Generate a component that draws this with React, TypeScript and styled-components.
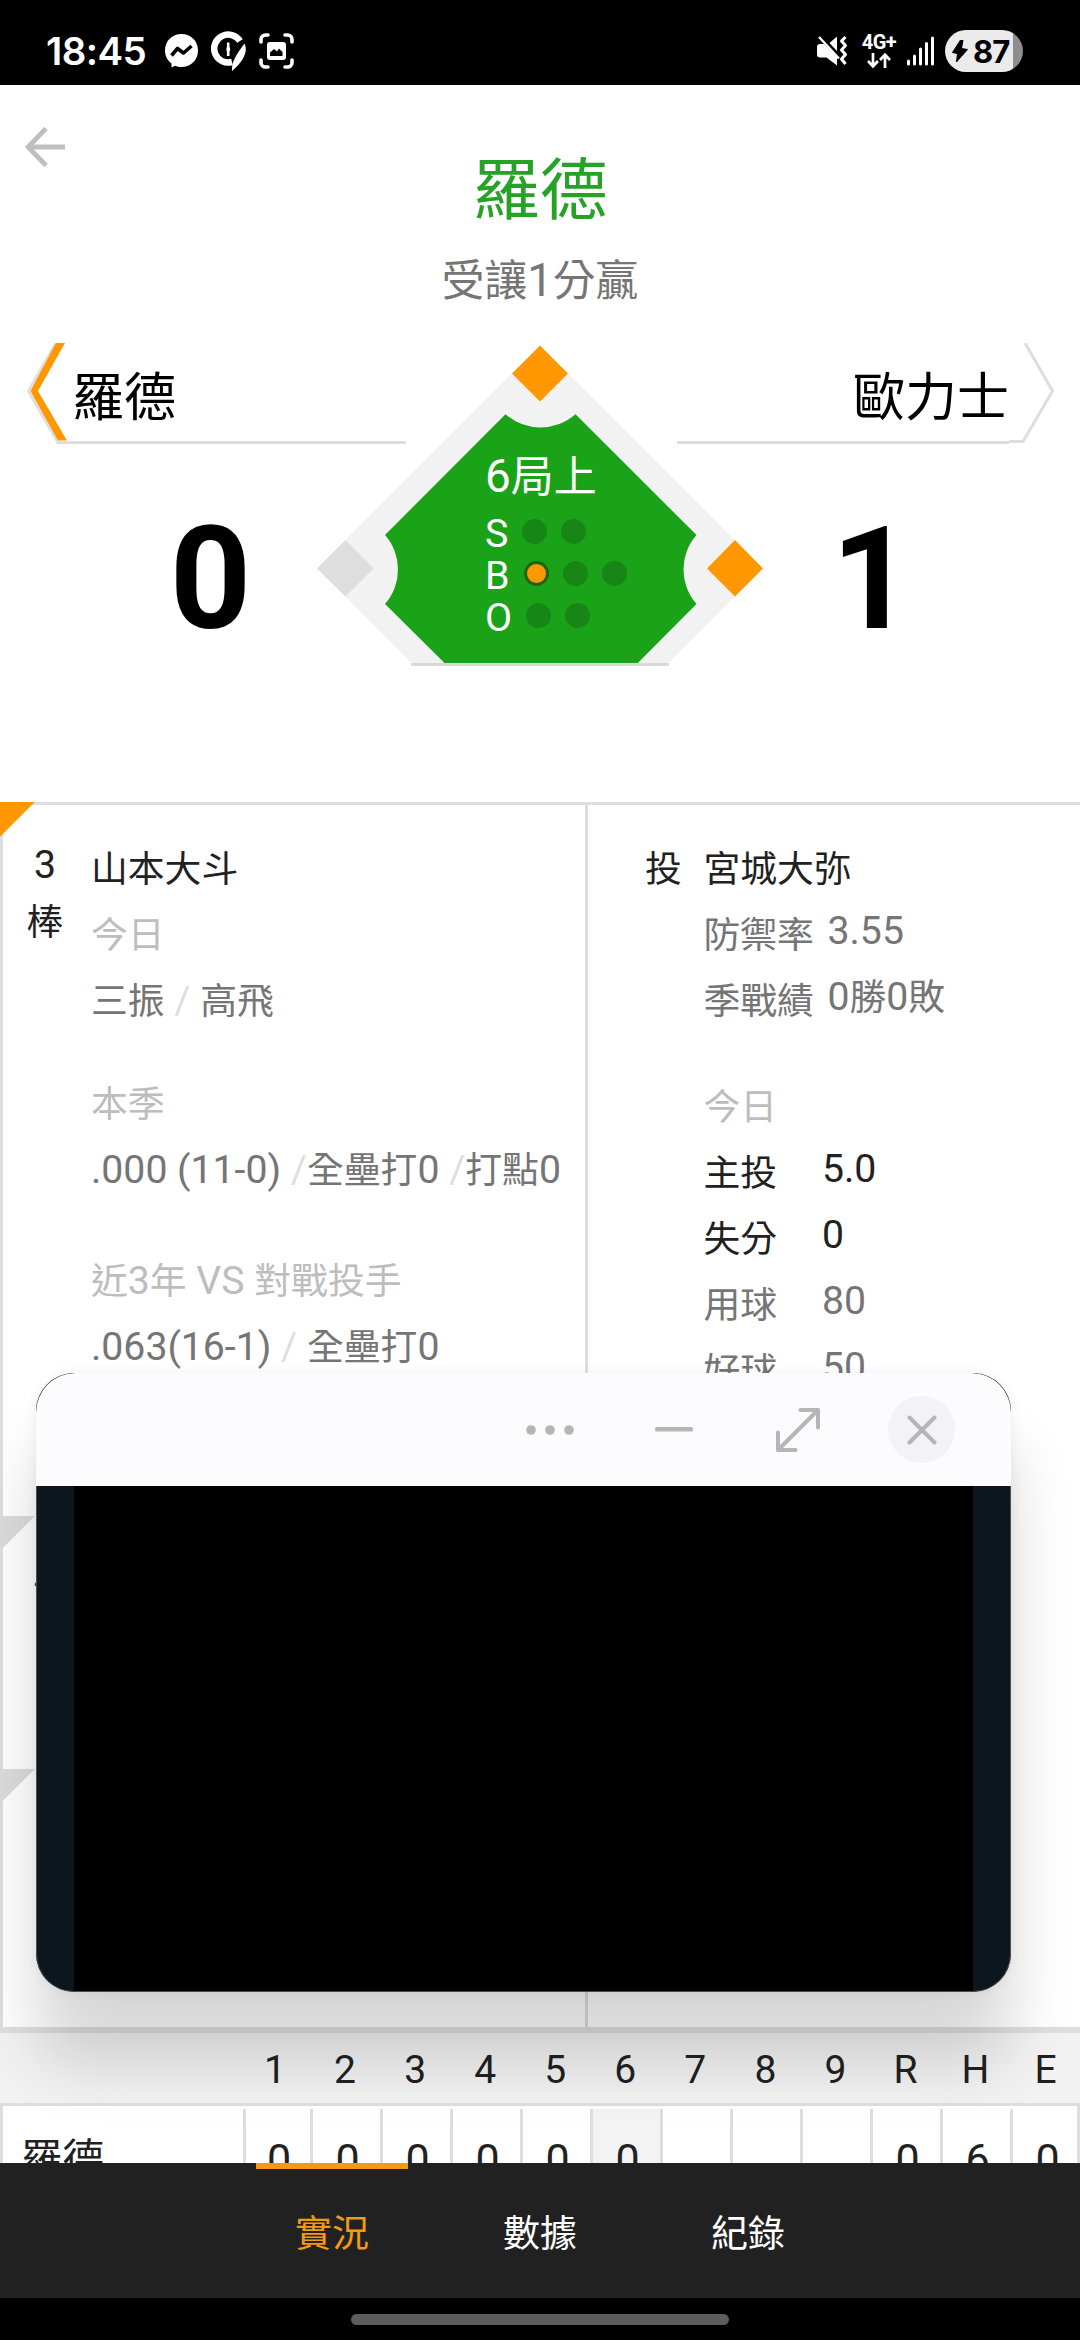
import React from "react";
import styled, { createGlobalStyle } from "styled-components";

const Global = createGlobalStyle`
  html, body { margin: 0; padding: 0; background: #000; }
  *, *::before, *::after { box-sizing: border-box; }
  svg { display: block; }
`;

const line = "#dedede";
const orange = "#ff9800";
const ink = { dark: "#212121", mid: "#757575", soft: "#bdbdbd", faint: "#dedede" };
type Tone = keyof typeof ink;

const Screen = styled.div`
  position: relative;
  width: 1080px;
  height: 2340px;
  display: flex;
  flex-direction: column;
  overflow: hidden;
  background: #fff;
  font-family: Roboto, "Noto Sans CJK TC", sans-serif;
  color: ${ink.dark};
`;

/* ---------- mixed script text ---------- */

const Latin = styled.span`
  font-size: 1.065em;
  line-height: 0;
`;

const Mixed = ({ children }: { children: string }) => (
  <>
    {children
      .split(/([\x20-\x7e]+)/)
      .filter(Boolean)
      .map((part, i) => (/^[\x20-\x7e]/.test(part) ? <Latin key={i}>{part}</Latin> : part))}
  </>
);

/* ---------- status bar ---------- */

const StatusBar = styled.header`
  flex: none;
  height: 85px;
  padding: 17px 57px 0 46px;
  display: flex;
  justify-content: space-between;
  align-items: flex-start;
  background: #000;
  color: #fff;
  font-family: Inter, sans-serif;
`;

const StatusGroup = styled.div<{ $gap: number }>`
  display: flex;
  align-items: center;
  gap: ${(p) => p.$gap}px;
  height: 68px;
`;

const Clock = styled.span`
  width: 106px;
  font-size: 38.5px;
  font-weight: 600;
  letter-spacing: -0.6px;
  line-height: 68px;
`;

const Network = styled.div`
  width: 34px;
  display: flex;
  flex-direction: column;
  align-items: center;
  gap: 3px;
`;

const NetworkLabel = styled.span`
  font-family: Roboto, sans-serif;
  font-size: 20px;
  font-weight: 700;
  line-height: 15px;
  letter-spacing: -0.5px;
`;

const Battery = styled.div`
  width: 78px;
  height: 42px;
  padding-left: 7px;
  display: flex;
  align-items: center;
  gap: 5px;
  border-radius: 21px;
  background: linear-gradient(90deg, #ebebeb 0 67.5px, #8e8e8e 67.5px);
  color: #000;
  font-size: 31px;
  font-weight: 700;
  letter-spacing: -1px;
`;

/* ---------- hero ---------- */

const Hero = styled.section`
  flex: none;
  height: 717px;
  display: flex;
  flex-direction: column;
`;

const TopRow = styled.div`
  height: 258px;
  display: grid;
  grid-template-columns: 140px 1fr 140px;
`;

const BackButton = styled.button`
  width: 80px;
  height: 80px;
  margin: 22px 0 0 5px;
  padding: 20px;
  border: 0;
  background: none;
`;

const Pick = styled.div`
  display: flex;
  flex-direction: column;
  align-items: center;
  white-space: pre;
`;

const PickTeam = styled.h1`
  margin: 56px 0 0;
  font-size: 67.5px;
  font-weight: 400;
  line-height: 100px;
  color: #26a326;
`;

const PickNote = styled.p`
  margin: 10px 0 0;
  font-size: 42.7px;
  line-height: 60px;
  color: ${ink.mid};
`;

const Board = styled.div`
  display: grid;
  grid-template-columns: 317px 89px 271px 86px 317px;
  grid-template-rows: 101px 240px;
`;

const TeamHead = styled.div<{ $away?: boolean }>`
  grid-row: 1;
  grid-column: ${(p) => (p.$away ? "4 / 6" : "1 / 3")};
  display: flex;
  flex-direction: ${(p) => (p.$away ? "row-reverse" : "row")};
  padding: ${(p) => (p.$away ? "0 26px 0 0" : "0 0 0 26px")};
`;

const TeamName = styled.div<{ $away?: boolean }>`
  flex: 1;
  border-bottom: 3px solid ${line};
  text-align: ${(p) => (p.$away ? "right" : "left")};
  text-indent: ${(p) => (p.$away ? 0 : 3)}px;
  font-size: 52px;
  line-height: 112px;
  color: #000;
`;

const Score = styled.div<{ $away?: boolean }>`
  grid-row: 2;
  grid-column: ${(p) => (p.$away ? 5 : 1)};
  margin-top: 33px;
  padding: ${(p) => (p.$away ? "0 99px 0 0" : "0 0 0 104px")};
  text-align: center;
  font-size: 142px;
  font-weight: 700;
  line-height: 206px;
  color: #000;
`;

const Field = styled.div`
  grid-row: 1 / 3;
  grid-column: 2 / 5;
  display: grid;
  & > * { grid-area: 1 / 1; }
`;

const FieldInfo = styled.div`
  z-index: 1;
  padding: 106px 0 0 168px;
  color: #fff;
`;

const Inning = styled.div`
  height: 63px;
  font-size: 43px;
  line-height: 56px;
`;

const CountRow = styled.div`
  display: flex;
  align-items: center;
  gap: 14px;
  height: 42px;
  font-size: 39.4px;
  line-height: 43px;
`;

const Dot = styled.i<{ $on?: boolean }>`
  width: 25px;
  height: 25px;
  margin-top: -3px;
  border-radius: 50%;
  border: ${(p) => (p.$on ? "3px solid #1c6410" : "0")};
  background: ${(p) => (p.$on ? orange : "#178617")};
`;

/* ---------- match-up panel ---------- */

const Matchup = styled.section`
  flex: none;
  height: 1231px;
  display: grid;
  grid-template-columns: 588px 1fr;
  border-top: 3px solid ${line};
  border-bottom: 6px solid ${line};
  font-size: 36.8px;
  white-space: pre;
`;

const Batters = styled.div`
  display: grid;
  grid-template-rows: 714px 253px 1fr;
  border-left: 3px solid ${line};
  border-right: 3px solid ${line};
`;

const BatterCard = styled.article<{ $active?: boolean }>`
  margin: -3px 0 0 -3px;
  padding: 35px 0 0 3px;
  display: grid;
  grid-template-columns: 84px 1fr;
  column-gap: 4px;
  background: linear-gradient(135deg, ${(p) => (p.$active ? orange : "#dcdcdc")} 0 24.4px, transparent 24.9px) 0 0 / 36px 36px no-repeat;
`;

const Order = styled.div`
  display: flex;
  flex-direction: column;
  align-items: center;
  line-height: 57px;
`;

const Lines = styled.div`
  display: flex;
  flex-direction: column;
`;

const Line = styled.div<{ $tone?: Tone; $gap?: number }>`
  height: 66px;
  margin-top: ${(p) => p.$gap ?? 0}px;
  line-height: 66px;
  color: ${(p) => ink[p.$tone ?? "dark"]};
`;

const Slash = styled.span`
  color: ${ink.faint};
`;

const Pitcher = styled.article`
  padding: 32px 0 0 57px;
  display: grid;
  grid-template-columns: 58.5px 1fr;
`;

const Stat = styled.dl<{ $tone?: Tone; $label?: number }>`
  height: 66px;
  margin: 0;
  display: grid;
  grid-template-columns: ${(p) => p.$label ?? 118.5}px auto;
  color: ${(p) => ink[p.$tone ?? "mid"]};
`;

const StatLabel = styled.dt`
  line-height: 66px;
`;

const StatValue = styled.dd`
  margin: 0;
  line-height: 58px;
`;

/* ---------- line score ---------- */

const LineScore = styled.section`
  flex: 1;
  min-height: 0;
  overflow: hidden;
`;

const InningsRow = styled.div`
  height: 73px;
  padding-left: 240px;
  display: grid;
  grid-template-columns: repeat(12, 70.05px);
  background: #f2f2f2;
  border-bottom: 3px solid ${line};
  text-align: center;
  font-size: 39px;
  line-height: 75px;
`;

const RunsRow = styled.div`
  height: 110px;
  display: grid;
  grid-template-columns: 240px 67px repeat(11, 70px);
  border-left: 3px solid ${line};
  border-right: 3px solid ${line};
`;

const RunsTeam = styled.div`
  padding: 3px 0 0 18px;
  font-size: 41.5px;
  line-height: 101px;
`;

const Run = styled.div<{ $now?: boolean }>`
  margin-top: 3px;
  padding-left: 2px;
  border-left: 3px solid ${line};
  background: ${(p) => (p.$now ? "#f3f3f3" : "none")};
  text-align: center;
  font-size: 43px;
  line-height: 101px;
`;

/* ---------- bottom navigation ---------- */

const Tabs = styled.nav`
  flex: none;
  height: 135px;
  display: flex;
  justify-content: center;
  background: #212121;
`;

const Tab = styled.a<{ $active?: boolean }>`
  width: 208px;
  display: flex;
  flex-direction: column;
  align-items: center;
  font-size: 37px;
  line-height: 129px;
  color: ${(p) => (p.$active ? "#f39a14" : "#fff")};
  &::before {
    content: "";
    flex: none;
    width: 152px;
    height: 6px;
    margin-bottom: 1px;
    background: ${(p) => (p.$active ? "#f39a14" : "transparent")};
  }
`;

const HomeBar = styled.footer`
  flex: none;
  height: 42px;
  padding-top: 16px;
  background: #000;
  &::before {
    content: "";
    display: block;
    width: 378px;
    height: 11px;
    margin: 0 auto;
    border-radius: 6px;
    background: #5c5c5c;
  }
`;

/* ---------- pop-up video window ---------- */

const Popup = styled.aside`
  position: absolute;
  left: 36px;
  top: 1373px;
  width: 975px;
  height: 618.5px;
  display: flex;
  flex-direction: column;
  border-radius: 38px;
  overflow: hidden;
  background: #0d161c;
  box-shadow: 0 70px 64px rgba(0, 0, 0, 0.155), 0 0 14px rgba(0, 0, 0, 0.06);
`;

const PopupBar = styled.div`
  height: 113px;
  padding-right: 56px;
  display: flex;
  justify-content: flex-end;
  align-items: center;
  gap: 57px;
  border-radius: 39.5px 39.5px 0 0;
  background: #fcfcfe;
`;

const PopupButton = styled.button<{ $filled?: boolean }>`
  width: 67px;
  height: 67px;
  padding: 0;
  display: grid;
  place-items: center;
  border: 0;
  border-radius: 50%;
  background: ${(p) => (p.$filled ? "#f3f3f5" : "none")};
`;

const Video = styled.div`
  flex: 1;
  padding: 0 37px 0;
  border: solid #4b4f52;
  border-width: 0 1px 1px;
  border-radius: 0 0 38px 38px;
  display: flex;
  &::before {
    content: "";
    flex: 1;
    background: #000;
  }
`;

const g = "#b5b5b7";

const FieldArt = () => (
  <svg width="446" height="341" viewBox="317 343 446 341">
    <path d="M540 345.5 763 568.5 668.500 663H411.500L317 568.500Z" fill="#f2f2f2" />
    <path
      d="M505.500 414.300A53.300 53.300 0 0 0 575.500 414.300L696.500 535A52.300 52.300 0 0 0 696.500 604L637.800 663H444.500L385 604A52.300 52.300 0 0 0 385 535Z"
      fill="#1aa318"
    />
    <rect x="411" y="663" width="258" height="3" fill="#d9d9d9" />
    <path d="M540 345.500 568 373.500 540 401.500 512 373.500Z" fill={orange} />
    <path d="M735 540 763 568.500 735 596.500 707 568.500Z" fill={orange} />
    <path d="M345.500 540 373.500 568.500 345.500 596.500 317 568.500Z" fill="#dedede" />
  </svg>
);

const COUNTS = [
  { label: "S", max: 2, on: 0 },
  { label: "B", max: 3, on: 1 },
  { label: "O", max: 2, on: 0 },
];

const PITCHING: { label: string; value: string; tone: Tone }[] = [
  { label: "主投", value: "5.0", tone: "dark" },
  { label: "失分", value: "0", tone: "dark" },
  { label: "用球", value: "80", tone: "mid" },
  { label: "好球", value: "50", tone: "mid" },
];

const HEAD = ["1", "2", "3", "4", "5", "6", "7", "8", "9", "R", "H", "E"];
const RUNS = ["0", "0", "0", "0", "0", "0", "", "", "", "0", "6", "0"];

export default function App() {
  return (
    <Screen>
      <Global />
      <StatusBar>
        <StatusGroup $gap={13}>
          <Clock>18:45</Clock>
          <svg width="33" height="34" viewBox="0 0 33 34">
            <path d="M16.500 0C26 0 33 7 33 16.500S26 33 16.500 33C14 33 12 32.600 10 31.800L6.500 33.600V29.500C2.500 26.500 0 22 0 16.500 0 7 7 0 16.500 0Z" fill="#fff" />
            <path d="M6.500 21.500 12.500 14.500 18.500 19 26.500 12" fill="none" stroke="#000" strokeWidth="3.600" strokeLinejoin="round" strokeLinecap="butt" />
          </svg>
          <svg width="35" height="40" viewBox="0 0 35 40">
            <path d="M29 10A14 14 0 1 0 21 31" fill="none" stroke="#fff" strokeWidth="6.500" />
            <path d="M33.500 12.500C36.500 19 35 28 21 40 20.500 33 23 26 33.500 12.500Z" fill="#fff" />
            <path d="M17.200 11.500V25" stroke="#fff" strokeWidth="2.600" />
            <path d="M15.500 18.200h3.600" stroke="#fff" strokeWidth="3.500" />
          </svg>
          <svg width="35" height="36" viewBox="0 0 35 36" fill="none">
            <path d="M2 9V6.500A4.500 4.500 0 0 1 6.500 2H9M26 2h2.500A4.500 4.500 0 0 1 33 6.500V9M33 27v2.500a4.500 4.500 0 0 1-4.500 4.500H26M9 34H6.500A4.500 4.500 0 0 1 2 29.500V27" stroke="#fff" strokeWidth="3.600" strokeLinecap="round" />
            <rect x="8" y="9" width="19" height="18" rx="3" fill="#fff" />
            <path d="M11 23v-3.500l4-3.500 3 2.500 2-3 3.500 3.500V23Z" fill="#000" />
          </svg>
        </StatusGroup>
        <StatusGroup $gap={11}>
          <svg width="34" height="32" viewBox="0 0 34 32">
            <path d="M0 12a3 3 0 0 1 3-3h4L20 22v8.500L9.500 22.500H3a3 3 0 0 1-3-3ZM20 1.500V16L12.500 8Z" fill="#fff" />
            <path d="M2 2 22 23.500" stroke="#fff" strokeWidth="2.400" />
            <path d="M28.500 2 24.500 6 28.500 10.500 24.500 15 28.500 19.500 24.500 24 28.500 29" fill="none" stroke="#fff" strokeWidth="3" strokeLinejoin="round" />
          </svg>
          <Network>
            <NetworkLabel>4G+</NetworkLabel>
            <svg width="24" height="15" viewBox="0 0 24 15" fill="none" stroke="#fff" strokeWidth="2.700">
              <path d="M6 0V13M1 8l5 5.300L11 8M18 15V2M13 7l5-5.300L23 7" />
            </svg>
          </Network>
          <svg width="27" height="30" viewBox="0 0 27 30" stroke="#fff" strokeWidth="3" strokeLinecap="round">
            <path d="M1.500 25v3M7.500 20v8M13.500 13v15M19.500 7.500V28M25.500 2V28" />
          </svg>
          <Battery>
            <svg width="16" height="22" viewBox="0 0 16 22">
              <path d="M8.500 0H11L9.500 8.500 15.500 9.500 4.500 22 5.500 13.500 0.500 12.500Z" fill="#000" stroke="#000" strokeLinejoin="round" />
            </svg>
            87
          </Battery>
        </StatusGroup>
      </StatusBar>

      <Hero>
        <TopRow>
          <BackButton aria-label="back">
            <svg width="40" height="40" viewBox="0 0 40 40" fill="none" stroke="#bfbfbf" strokeWidth="4.800">
              <path d="M40 20H3M21 1.500 3 20 21 38.500" />
            </svg>
          </BackButton>
          <Pick>
            <PickTeam>羅德</PickTeam>
            <PickNote>
              <Mixed>受讓1分贏</Mixed>
            </PickNote>
          </Pick>
        </TopRow>
        <Board>
          <TeamHead>
            <svg width="43" height="101" viewBox="0 0 43 101" fill="none">
              <path d="M30 0 2.500 48 32 99.500H43" stroke={line} strokeWidth="3" />
              <path d="M30 0H39L12 48 41 97.500H32L4.500 48Z" fill={orange} />
            </svg>
            <TeamName>羅德</TeamName>
          </TeamHead>
          <TeamHead $away>
            <svg width="45" height="101" viewBox="0 0 45 101" fill="none">
              <path d="M16 0 43.500 48 14 98.500H0" stroke={line} strokeWidth="3" />
            </svg>
            <TeamName $away>歐力士</TeamName>
          </TeamHead>
          <Score>0</Score>
          <Score $away>1</Score>
          <Field>
            <FieldArt />
            <FieldInfo>
              <Inning>
                <Mixed>6局上</Mixed>
              </Inning>
              {COUNTS.map((c) => (
                <CountRow key={c.label}>
                  {c.label}
                  {Array.from({ length: c.max }, (_, i) => (
                    <Dot key={i} $on={i < c.on} />
                  ))}
                </CountRow>
              ))}
            </FieldInfo>
          </Field>
        </Board>
      </Hero>

      <Matchup>
        <Batters>
          <BatterCard $active>
            <Order>
              <div><Mixed>3</Mixed></div>
              <div>棒</div>
            </Order>
            <Lines>
              <Line>山本大斗</Line>
              <Line $tone="soft">今日</Line>
              <Line $tone="mid">
                三振<Slash><Mixed> / </Mixed></Slash>高飛
              </Line>
              <Line $tone="soft" $gap={37}>本季</Line>
              <Line $tone="mid">
                <Mixed>.000 (11-0)</Mixed>
                <Slash><Mixed> /</Mixed></Slash>
                <Mixed>全壘打0</Mixed>
                <Slash><Mixed> /</Mixed></Slash>
                <Mixed>打點0</Mixed>
              </Line>
              <Line $tone="soft" $gap={45}>
                <Mixed>近3年 VS 對戰投手</Mixed>
              </Line>
              <Line $tone="mid">
                <Mixed>.063(16-1)</Mixed>
                <Slash><Mixed> / </Mixed></Slash>
                <Mixed>全壘打0</Mixed>
              </Line>
            </Lines>
          </BatterCard>
          <BatterCard>
            <Order>
              <div><Mixed>4</Mixed></div>
            </Order>
          </BatterCard>
          <BatterCard />
        </Batters>
        <Pitcher>
          <Line>投</Line>
          <Lines>
            <Line>宮城大弥</Line>
            <Stat $label={124}>
              <StatLabel>防禦率</StatLabel>
              <StatValue><Mixed>3.55</Mixed></StatValue>
            </Stat>
            <Stat $label={124}>
              <StatLabel>季戰績</StatLabel>
              <StatValue><Mixed>0勝0敗</Mixed></StatValue>
            </Stat>
            <Line $tone="soft" $gap={40}>今日</Line>
            {PITCHING.map((s) => (
              <Stat key={s.label} $tone={s.tone}>
                <StatLabel>{s.label}</StatLabel>
                <StatValue><Mixed>{s.value}</Mixed></StatValue>
              </Stat>
            ))}
          </Lines>
        </Pitcher>
      </Matchup>

      <LineScore>
        <InningsRow>
          {HEAD.map((h) => (
            <span key={h}>{h}</span>
          ))}
        </InningsRow>
        <RunsRow>
          <RunsTeam>羅德</RunsTeam>
          {RUNS.map((r, i) => (
            <Run key={i} $now={i === 5}>{r}</Run>
          ))}
        </RunsRow>
      </LineScore>

      <Tabs>
        <Tab $active>實況</Tab>
        <Tab>數據</Tab>
        <Tab>紀錄</Tab>
      </Tabs>
      <HomeBar />

      <Popup>
        <PopupBar>
          <PopupButton aria-label="more">
            <svg width="48" height="10" viewBox="0 0 48 10" fill={g}>
              <circle cx="5" cy="5" r="4.800" />
              <circle cx="24" cy="5" r="4.800" />
              <circle cx="43" cy="5" r="4.800" />
            </svg>
          </PopupButton>
          <PopupButton aria-label="minimize">
            <svg width="38" height="5" viewBox="0 0 38 5">
              <rect width="38" height="4.600" rx="1.500" fill={g} />
            </svg>
          </PopupButton>
          <PopupButton aria-label="expand">
            <svg width="46" height="46" viewBox="0 0 46 46" fill="none" stroke={g} strokeWidth="4" strokeLinecap="round" strokeLinejoin="round">
              <path d="M3 43 43 3M25.500 3H43V20.500M3 25.500V43H20.500" />
            </svg>
          </PopupButton>
          <PopupButton $filled aria-label="close">
            <svg width="30" height="30" viewBox="0 0 30 30" stroke={g} strokeWidth="4" strokeLinecap="round">
              <path d="M2.500 2.500 27.500 27.500M27.500 2.500 2.500 27.500" />
            </svg>
          </PopupButton>
        </PopupBar>
        <Video />
      </Popup>
    </Screen>
  );
}
